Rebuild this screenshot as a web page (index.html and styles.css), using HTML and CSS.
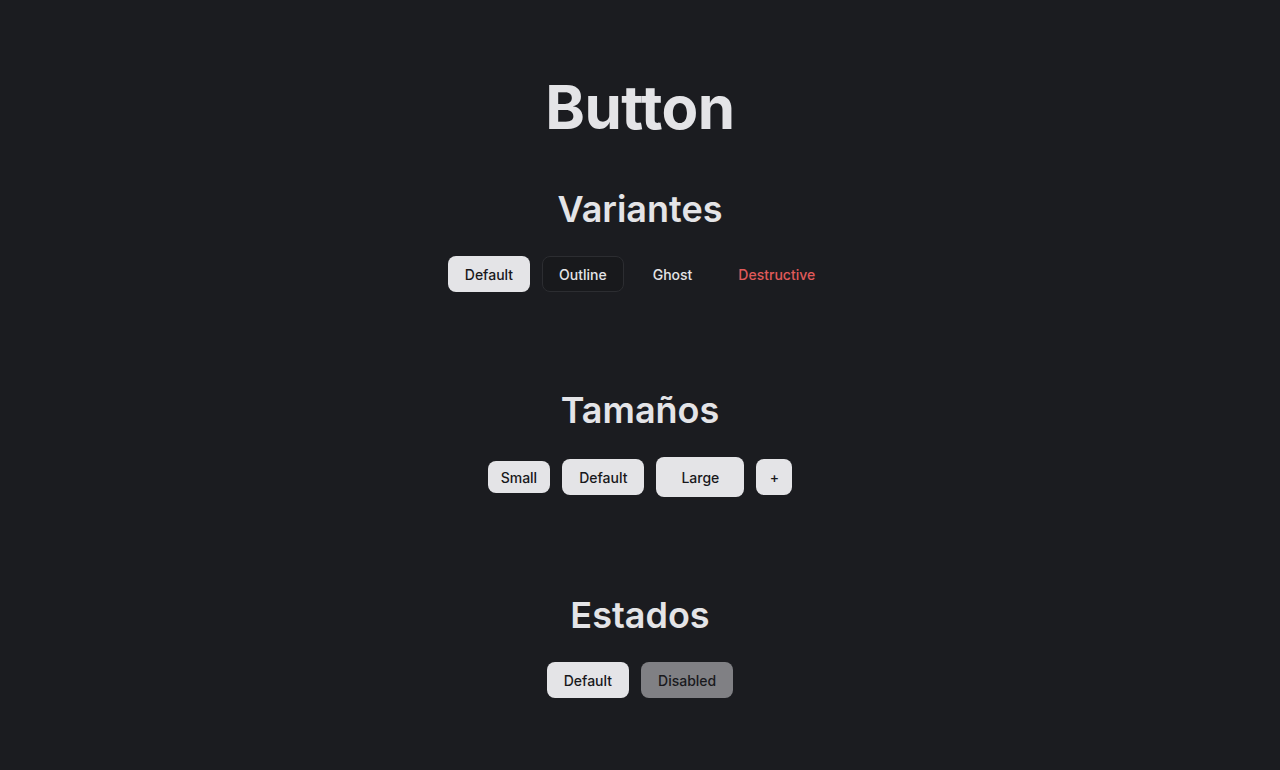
FILE: index.html
```html
<!DOCTYPE html>
<html>
<head>
  <title>Button</title>
  <link rel="stylesheet" href="styles.css">
</head>
<body>
  <main class="page">
    <h1 class="title">Button</h1>

    <section class="section">
      <h2>Variantes</h2>
      <div class="row">
        <button class="btn btn-default">Default</button>
        <button class="btn btn-outline">Outline</button>
        <button class="btn btn-ghost">Ghost</button>
        <button class="btn btn-destructive">Destructive</button>
      </div>
    </section>

    <section class="section">
      <h2>Tamaños</h2>
      <div class="row">
        <button class="btn btn-default btn-sm">Small</button>
        <button class="btn btn-default">Default</button>
        <button class="btn btn-default btn-lg">Large</button>
        <button class="btn btn-default btn-icon">+</button>
      </div>
    </section>

    <section class="section">
      <h2>Estados</h2>
      <div class="row">
        <button class="btn btn-default">Default</button>
        <button class="btn btn-default" disabled>Disabled</button>
      </div>
    </section>
  </main>
</body>
</html>
```

FILE: styles.css
```css
body {
  margin: 0;
  background: #1b1c20;
  color: #e4e4e7;
  font-family: Inter, "Noto Sans", sans-serif;
}
.page {
  display: flex;
  flex-direction: column;
  align-items: center;
  padding-top: 74px;
}
.title {
  margin: 0 0 46px;
  font-size: 60px;
  line-height: 67px;
  font-weight: 700;
  letter-spacing: -0.5px;
}
.section {
  display: flex;
  flex-direction: column;
  align-items: center;
  margin-bottom: 96px;
}
.section h2 {
  margin: 0 0 25px;
  font-size: 36px;
  line-height: 44px;
  font-weight: 600;
  letter-spacing: 0;
}
.row {
  display: flex;
  align-items: center;
  gap: 12px;
}
.btn {
  height: 36px;
  padding: 0 16px;
  border: 1px solid transparent;
  border-radius: 8px;
  font-family: Inter, sans-serif;
  font-size: 14px;
  font-weight: 500;
  cursor: pointer;
}
.btn-default {
  background: #e4e4e7;
  color: #18181b;
}
.btn-outline {
  background: #18191c;
  border-color: #2c2d31;
  color: #e4e4e7;
}
.btn-ghost {
  background: transparent;
  color: #e4e4e7;
}
.btn-destructive {
  background: transparent;
  color: #e05a5a;
}
.btn-sm {
  height: 32px;
  padding: 0 12px;
}
.btn-lg {
  height: 40px;
  padding: 0 24px;
}
.btn-icon {
  width: 36px;
  padding: 0;
}
.btn:disabled {
  opacity: 0.5;
  cursor: default;
}
```
